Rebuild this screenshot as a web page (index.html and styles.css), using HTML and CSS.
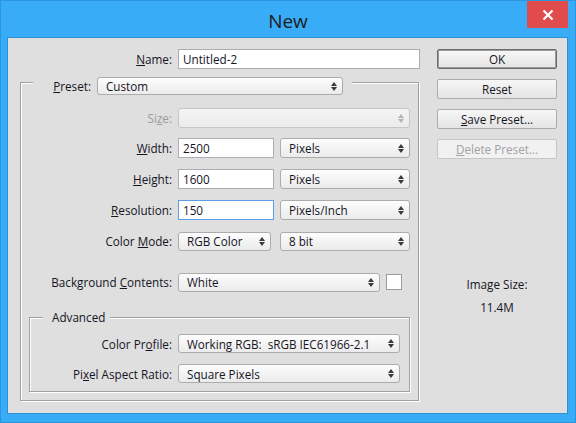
FILE: index.html
```html
<!DOCTYPE html>
<html>
<head>
<meta charset="utf-8">
<title>New</title>
<link rel="stylesheet" href="styles.css">
</head>
<body>
<div class="win">
  <div class="titlebar">
    <div class="title">New</div>
    <div class="close">
      <svg width="12" height="12" viewBox="0 0 12 12"><path d="M1.5 1.5 L10.5 10.5 M10.5 1.5 L1.5 10.5" stroke="#fff" stroke-width="2.2" fill="none"/></svg>
    </div>
  </div>
  <div class="content">
    <div class="left">
      <div class="row">
        <span class="lbl lbl-top"><u>N</u>ame:</span>
        <div class="input w-name">Untitled-2</div>
      </div>

      <div class="group preset">
        <div class="legend preset-legend">
          <span class="lbl lbl-legend"><u>P</u>reset:</span>
          <div class="select w-preset h18">Custom<span class="arr"></span></div>
        </div>

        <div class="row mt13">
          <span class="lbl lbl-grp dis">Si<u>z</u>e:</span>
          <div class="select disabled w-size"><span class="arr"></span></div>
        </div>
        <div class="row mt10">
          <span class="lbl lbl-grp"><u>W</u>idth:</span>
          <div class="input w-num">2500</div>
          <div class="select w-unit">Pixels<span class="arr"></span></div>
        </div>
        <div class="row mt11">
          <span class="lbl lbl-grp"><u>H</u>eight:</span>
          <div class="input w-num">1600</div>
          <div class="select w-unit">Pixels<span class="arr"></span></div>
        </div>
        <div class="row mt11">
          <span class="lbl lbl-grp"><u>R</u>esolution:</span>
          <div class="input w-num focus">150</div>
          <div class="select w-unit">Pixels/Inch<span class="arr"></span></div>
        </div>
        <div class="row mt11">
          <span class="lbl lbl-grp">Color <u>M</u>ode:</span>
          <div class="select w-mode h19">RGB Color<span class="arr"></span></div>
          <div class="select w-unit h19 ml9">8 bit<span class="arr"></span></div>
        </div>
        <div class="row mt21">
          <span class="lbl lbl-grp">Background <u>C</u>ontents:</span>
          <div class="select w-bg h19">White<span class="arr"></span></div>
          <div class="swatch"></div>
        </div>

        <div class="group advanced">
          <div class="legend adv-legend">Advanced</div>
          <div class="row mt9 h19row">
            <span class="lbl lbl-adv">Color Pr<u>o</u>file:</span>
            <div class="select w-adv h19">Working RGB:&nbsp; sRGB IEC61966-2.1<span class="arr"></span></div>
          </div>
          <div class="row mt11 h19row">
            <span class="lbl lbl-adv">Pi<u>x</u>el Aspect Ratio:</span>
            <div class="select w-adv h19">Square Pixels<span class="arr"></span></div>
          </div>
        </div>
      </div>
    </div>

    <div class="right">
      <div class="btn default">OK</div>
      <div class="btn">Reset</div>
      <div class="btn"><span><u>S</u>ave Preset...</span></div>
      <div class="btn disabled"><span><u>D</u>elete Preset...</span></div>
      <div class="imgsize">
        <div class="is-label">Image Size:</div>
        <div class="is-value">11.4M</div>
      </div>
    </div>
  </div>
</div>
</body>
</html>
```

FILE: styles.css
```css
* { box-sizing: border-box; }
html, body { margin: 0; padding: 0; }
body {
  width: 576px;
  height: 423px;
  overflow: hidden;
  background: #38acf6;
  font-family: "Open Sans", "Noto Sans", sans-serif;
  font-size: 11.7px;
  color: #15151f;
}
u { text-decoration: underline; text-underline-offset: 1px; text-decoration-thickness: 1px; }

.win {
  width: 576px;
  height: 423px;
  background: #38acf6;
  box-shadow: inset 0 0 0 1px #2b96de;
  display: flex;
  flex-direction: column;
}

.titlebar {
  height: 38px;
  display: grid;
  grid-template-columns: 1fr auto 1fr;
  align-items: start;
}
.title {
  grid-column: 2;
  font-size: 19px;
  line-height: 34px;
  padding-top: 4px;
  color: #1c1c1c;
}
.close {
  grid-column: 3;
  justify-self: end;
  width: 41px;
  height: 27px;
  margin: 1px 8px 0 0;
  background: #e04b4b;
  display: flex;
  align-items: center;
  justify-content: center;
}

.content {
  margin-left: 8px;
  width: 559px;
  height: 375px;
  background: #dfdfdf;
  box-shadow: 0 0 0 1px #2e90d6;
  display: flex;
  padding-top: 11px;
}
.left { width: 429px; }
.right {
  width: 120px;
  display: flex;
  flex-direction: column;
  gap: 10px;
}

.row {
  display: flex;
  align-items: center;
  height: 20px;
}
.h19row { height: 19px; }
.mt9 { margin-top: 9px; }
.mt10 { margin-top: 10px; }
.mt11 { margin-top: 11px; }
.mt13 { margin-top: 13px; }
.mt21 { margin-top: 21px; }
.ml9 { margin-left: 9px; }

.lbl {
  flex: none;
  text-align: right;
  white-space: nowrap;
  margin-right: 6px;
}
.lbl-top { width: 164px; }
.lbl-grp { width: 151px; }
.lbl-adv { width: 142px; }
.lbl-legend { width: 58px; }
.dis { color: #9a9a9a; }

.input {
  flex: none;
  height: 20px;
  border: 1px solid #abadb3;
  background: #fff;
  padding: 0 4px;
  display: flex;
  align-items: center;
  white-space: nowrap;
}
.input.focus { border-color: #5a9fe6; }
.w-name { width: 242px; }
.w-num { width: 96px; margin-right: 6px; }

.select {
  flex: none;
  height: 20px;
  border: 1px solid #acacac;
  border-radius: 3px;
  background: linear-gradient(#fdfdfd, #ebebeb);
  padding-left: 8px;
  display: flex;
  align-items: center;
  white-space: nowrap;
}
.select.h18 { height: 18px; }
.select.h19 { height: 19px; }
.select.disabled {
  background: linear-gradient(#f4f4f4, #ececec);
  border-color: #c7c7c7;
}
.w-preset { width: 246px; }
.w-size { width: 232px; }
.w-unit { width: 130px; }
.w-mode { width: 93px; }
.w-bg { width: 202px; }
.w-adv { width: 222px; }

.arr {
  margin-left: auto;
  margin-right: 5px;
  display: flex;
  flex-direction: column;
  gap: 1px;
}
.arr::before, .arr::after {
  content: "";
  width: 0;
  height: 0;
  border-left: 3px solid transparent;
  border-right: 3px solid transparent;
}
.arr::before { border-bottom: 4px solid #3a3a3a; }
.arr::after { border-top: 4px solid #3a3a3a; }
.disabled .arr::before { border-bottom-color: #b3b3b3; }
.disabled .arr::after { border-top-color: #b3b3b3; }

.swatch {
  flex: none;
  width: 16px;
  height: 16px;
  margin-left: 6px;
  background: #fff;
  border: 1px solid #9c9c9c;
}

.group {
  border: 1px solid #a0a0a0;
  box-shadow: inset 1px 1px 0 #fff, 1px 1px 0 #fff;
  display: flex;
  flex-direction: column;
  align-items: flex-start;
}
.preset {
  width: 399px;
  margin: 13px 0 0 12px;
}
.legend {
  background: #dfdfdf;
  display: flex;
  align-items: center;
}
.preset-legend {
  margin: -6px 0 0 12px;
  padding-right: 9px;
}
.advanced {
  align-self: stretch;
  margin: 25px 8px 8px 8px;
  padding-bottom: 8px;
}
.adv-legend {
  margin: -9px 0 0 13px;
  padding: 0 5px 0 9px;
  line-height: 16px;
  height: 16px;
}

.btn {
  height: 20px;
  border: 1px solid #acacac;
  border-radius: 2px;
  background: linear-gradient(#f7f7f7, #e4e4e4);
  display: flex;
  align-items: center;
  justify-content: center;
  white-space: nowrap;
}
.btn.default {
  border-color: #6c6c6c;
  box-shadow: inset 0 0 0 1px #9a9a9a;
}
.btn.disabled {
  background: #f1f1f1;
  border-color: #c6c6c6;
  color: #a2a2a2;
}

.imgsize {
  margin-top: 107px;
  text-align: center;
  line-height: 16px;
}
.is-value { margin-top: 7px; }
```
